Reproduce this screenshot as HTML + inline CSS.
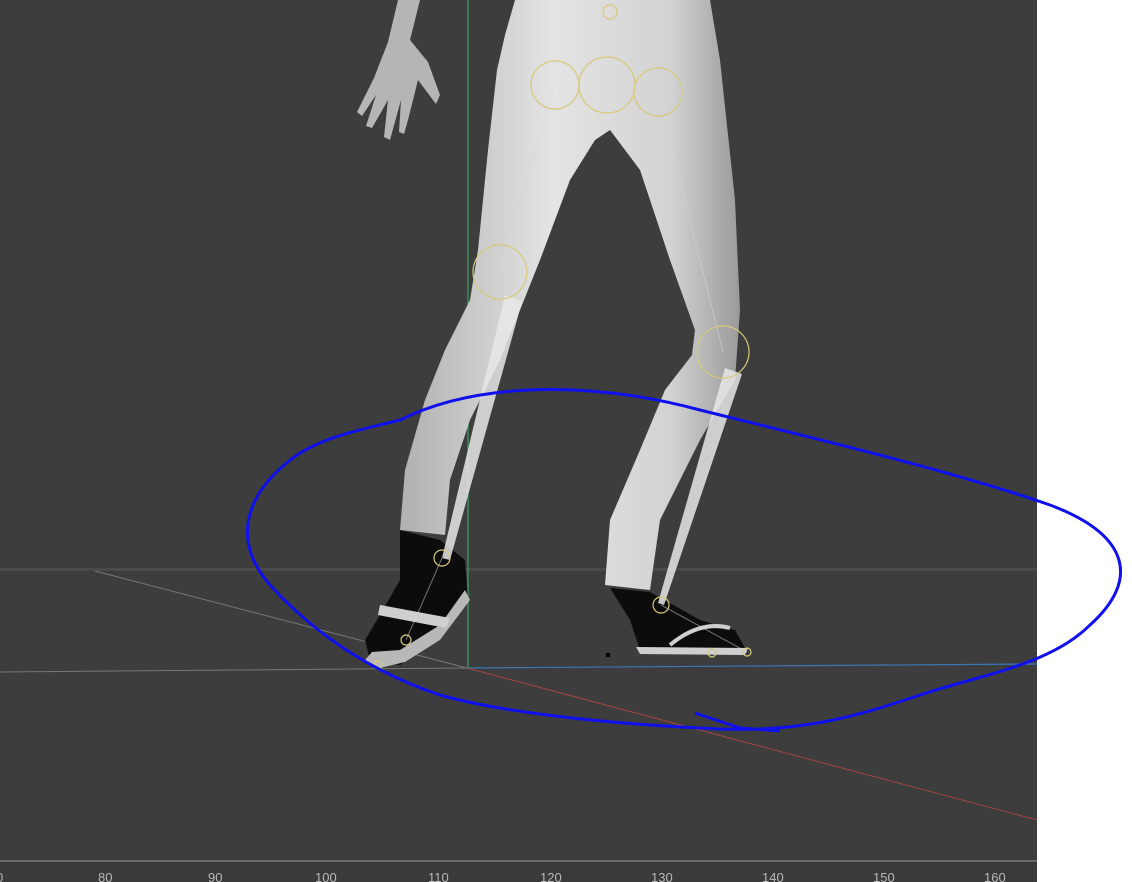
<!DOCTYPE html>
<html><head><meta charset="utf-8"><style>
html,body{margin:0;padding:0;width:1132px;height:882px;overflow:hidden;background:#fff}
svg{display:block}
text{font-family:"Liberation Sans",sans-serif;font-size:13px;fill:#b8b8b8}
</style></head><body>
<svg width="1132" height="882" viewBox="0 0 1132 882" xmlns="http://www.w3.org/2000/svg">
<defs>
<linearGradient id="leg" x1="0" x2="1" y1="0" y2="0">
<stop offset="0" stop-color="#b0b0b0"/><stop offset="0.45" stop-color="#e4e4e4"/><stop offset="0.8" stop-color="#d2d2d2"/><stop offset="1" stop-color="#9a9a9a"/>
</linearGradient>
</defs>
<rect x="0" y="0" width="1037" height="882" fill="#3d3d3d"/>
<rect x="1037" y="0" width="95" height="882" fill="#ffffff"/>
<rect x="0" y="568" width="1037" height="3" fill="#4a4a4a"/>
<rect x="0" y="859" width="1037" height="23" fill="#3a3a3a"/>
<rect x="0" y="860" width="1037" height="2" fill="#6a6a6a"/>
<g>
<text x="-4" y="882">0</text><text x="98" y="882">80</text><text x="208" y="882">90</text>
<text x="315" y="882">100</text><text x="428" y="882">110</text><text x="540" y="882">120</text>
<text x="651" y="882">130</text><text x="762" y="882">140</text><text x="873" y="882">150</text><text x="984" y="882">160</text>
</g>
<line x1="95" y1="571" x2="467" y2="668" stroke="#777" stroke-width="1"/>
<line x1="0" y1="672" x2="467" y2="668" stroke="#777" stroke-width="1"/>
<line x1="467" y1="668" x2="1037" y2="664" stroke="#3a78b8" stroke-width="1.2"/>
<line x1="467" y1="668" x2="1037" y2="820" stroke="#a04545" stroke-width="1"/>
<line x1="468" y1="0" x2="468" y2="668" stroke="#3fa060" stroke-width="1.2"/>
<!-- body -->
<path d="M515 0 L710 0 L720 60 L735 200 L740 310 L735 380 L700 440 L660 520 L650 590 L605 585 L610 520 L640 450 L665 390 L692 355 L695 330 L670 260 L640 170 L610 130 L595 140 L570 180 L540 260 L520 310 L500 360 L470 420 L450 480 L445 535 L400 530 L405 470 L425 400 L445 350 L470 300 L478 250 L488 150 L497 70 L505 35 Z" fill="url(#leg)"/>
<!-- feet left -->
<path d="M400 530 L440 540 L465 560 L468 600 L440 640 L400 665 L370 660 L365 640 L380 615 L400 580 Z" fill="#0c0c0c"/>
<path d="M465 590 L470 600 L440 640 L405 662 L380 668 L365 660 L372 652 L400 650 L440 625 Z" fill="#b8b8b8"/>
<path d="M380 605 L450 618 L446 628 L378 615 Z" fill="#cfcfcf"/>
<!-- feet right -->
<path d="M610 588 L650 592 L700 620 L735 630 L745 648 L720 652 L640 650 L630 620 Z" fill="#0c0c0c"/>
<path d="M636 647 L748 648 L745 655 L640 654 Z" fill="#cfcfcf"/>
<path d="M670 645 Q700 620 730 628" fill="none" stroke="#cfcfcf" stroke-width="4"/>
<!-- bone shafts -->
<path d="M505 295 L522 302 L450 560 L442 558 Z" fill="#e8e8e8" opacity="0.85"/>
<path d="M725 368 L742 374 L664 605 L658 603 Z" fill="#e8e8e8" opacity="0.85"/>
<g stroke="#d8d8d8" stroke-width="1" opacity="0.5">
<line x1="555" y1="85" x2="500" y2="272"/><line x1="658" y1="92" x2="723" y2="352"/>
<line x1="442" y1="558" x2="406" y2="640"/><line x1="661" y1="605" x2="747" y2="652"/>
</g>
<!-- hand -->
<path d="M398 0 L420 0 L410 40 L428 62 L440 95 L436 104 L418 80 L408 120 L404 134 L399 132 L401 100 L390 140 L384 137 L388 100 L372 128 L366 126 L376 95 L362 116 L357 112 L374 78 L388 42 Z" fill="#b5b5b5"/>
<g fill="none" stroke="#d9c87a" stroke-width="1.2">
<circle cx="555" cy="85" r="24"/><circle cx="607" cy="85" r="28"/><circle cx="658" cy="92" r="24"/>
<circle cx="500" cy="272" r="27"/><circle cx="723" cy="352" r="26"/>
<circle cx="442" cy="558" r="8"/><circle cx="406" cy="640" r="5"/><circle cx="378" cy="665" r="4"/>
<circle cx="661" cy="605" r="8"/><circle cx="712" cy="653" r="4"/><circle cx="747" cy="652" r="4"/>
<circle cx="610" cy="12" r="7"/>
</g>
<rect x="606" y="653" width="4" height="4" fill="#000"/>
<path d="M400 420 C470 385 580 378 700 410 C800 435 950 470 1050 505 C1130 535 1140 580 1090 625 C1050 665 980 675 920 695 C860 715 800 735 700 728 C600 723 500 712 440 695 C380 675 320 640 270 585 C235 545 240 500 290 460 C320 437 360 430 400 420 Z" fill="none" stroke="#1010ee" stroke-width="3"/>
<path d="M695 713 L740 728 L780 731" fill="none" stroke="#1010ee" stroke-width="3"/>
</svg>
</body></html>
